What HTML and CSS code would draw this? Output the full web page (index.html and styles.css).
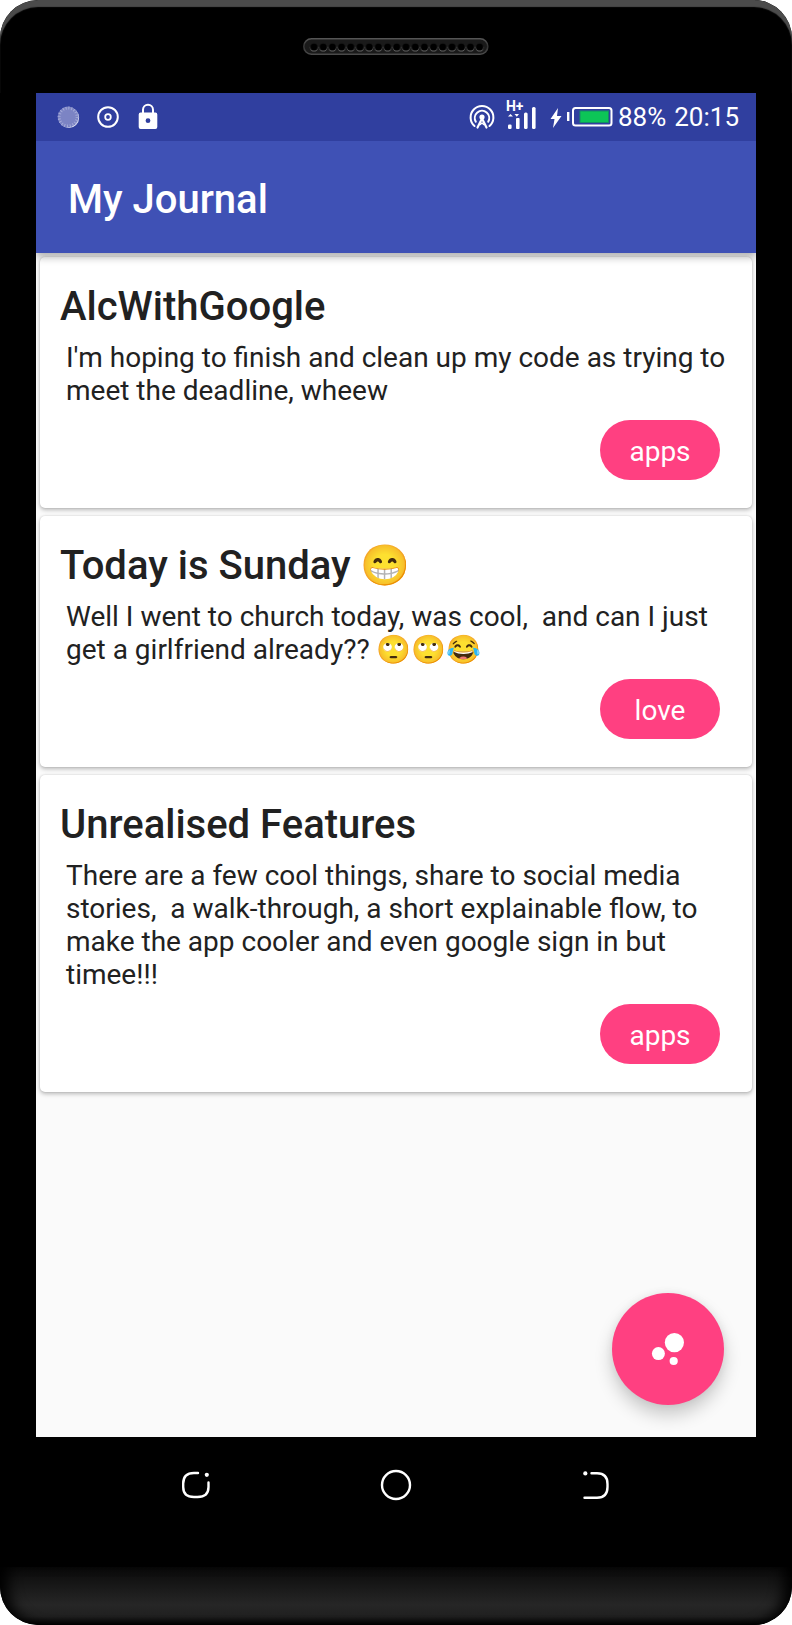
FILE: index.html
```html
<!DOCTYPE html>
<html lang="en">
<head>
<meta charset="utf-8">
<meta name="viewport" content="width=device-width, initial-scale=1">
<title>My Journal</title>
<link rel="stylesheet" href="styles.css">
</head>
<body>
<div class="phone">
  <div class="bezel-top">
    <svg class="speaker" width="186" height="17" viewBox="0 0 186 17" aria-hidden="true">
      <defs>
        <linearGradient id="rim" x1="0" y1="0" x2="0" y2="1">
          <stop offset="0" stop-color="#555"/><stop offset=".5" stop-color="#333"/><stop offset="1" stop-color="#4a4a4a"/>
        </linearGradient>
        <pattern id="holes" x="6.4" y="4" width="9.2" height="10" patternUnits="userSpaceOnUse">
          <circle cx="4.6" cy="5.6" r="4" fill="#626262"/><circle cx="4.6" cy="4.6" r="4" fill="#151515"/><circle cx="4.6" cy="5" r="3.3" fill="#000"/>
        </pattern>
      </defs>
      <rect x=".8" y=".8" width="184" height="15.4" rx="7.7" fill="#1a1a1a" stroke="url(#rim)" stroke-width="1.6"/>
      <rect x="6.4" y="4" width="174.8" height="10" fill="url(#holes)"/>
    </svg>
  </div>

  <div class="screen">
    <div class="status-bar">
      <div class="status-left">
        <svg width="24" height="28" viewBox="0 0 24 28" aria-hidden="true">
          <circle cx="12.9" cy="14.8" r="10.2" fill="#dfe2f3"/>
          <circle cx="12.1" cy="14" r="10.4" fill="#7c84c4"/>
          <circle cx="12.1" cy="14" r="9" fill="none" stroke="#a5abd8" stroke-width="3" stroke-dasharray="1 1.83"/>
        </svg>
        <svg width="24" height="28" viewBox="0 0 24 28" fill="none" stroke="#fff" aria-hidden="true">
          <circle cx="12" cy="14" r="9.8" stroke-width="2"/><circle cx="12" cy="14" r="2.8" stroke-width="1.8"/>
        </svg>
        <svg width="24" height="28" viewBox="0 0 24 28" aria-hidden="true">
          <path d="M7 11V6.800A5 5 0 0 1 17 6.800V11" fill="none" stroke="#fff" stroke-width="2"/>
          <path fill="#fff" fill-rule="evenodd" d="M4.600 9.500H19.400Q21.300 9.500 21.300 11.400V24Q21.300 26 19.400 26H4.600Q2.700 26 2.700 24V11.400Q2.700 9.500 4.600 9.500ZM12 15.300A2.400 2.400 0 1 0 12 20.100A2.400 2.400 0 1 0 12 15.300Z"/>
        </svg>
      </div>
      <div class="status-right">
        <svg width="26" height="28" viewBox="0 0 26 28" fill="none" stroke="#fff" stroke-width="2" stroke-linecap="round" stroke-linejoin="round" aria-hidden="true">
          <path d="M5.500 23A11.400 11.400 0 1 1 20.500 23"/>
          <path d="M6.800 18.700A7.200 7.200 0 1 1 19.200 18.700"/>
          <path d="M8.500 24.500L13 15.500L17.500 24.500" stroke-width="2.200"/>
          <path d="M11.200 21.500L13 20L14.800 21.500" stroke-width="1.600"/>
          <circle cx="13" cy="14" r="1.600" fill="#fff"/>
        </svg>
        <div class="network">
          <span class="network-type">H+</span>
          <svg width="30" height="28" viewBox="0 0 30 28" fill="#fff" aria-hidden="true">
            <path d="M2 13.500L4.500 11L7 13.500ZM8.500 11H13L10.800 13.800Z"/>
            <rect x="2" y="21.500" width="3.600" height="4.500" rx="1.200"/><rect x="10" y="15" width="3.600" height="11" rx="1"/><rect x="18" y="9.500" width="3.600" height="16.500" rx="1.500"/><rect x="26" y="4" width="3.600" height="22" rx="1.500"/>
          </svg>
        </div>
        <svg class="bolt" width="12" height="28" viewBox="0 0 12 28" aria-hidden="true"><path fill="#fff" d="M8 5L.500 16H4.500L3 25L11.500 13H7Z"/></svg>
        <svg class="battery" width="46" height="28" viewBox="0 0 46 28" aria-hidden="true">
          <rect x="0" y="9" width="2.400" height="9" fill="#fff"/>
          <rect x="6" y="5" width="38.500" height="17.500" rx="2.500" fill="none" stroke="#fff" stroke-width="2"/>
          <rect x="13" y="8" width="28.500" height="11.500" fill="#0cc557" stroke="#148d65"/>
        </svg>
        <span>88%</span>
        <time class="clock">20:15</time>
      </div>
    </div>

    <header class="app-bar"><h1 class="heading">My Journal</h1></header>

    <main class="content">
      <article class="card">
        <h2 class="heading">AlcWithGoogle</h2>
        <p class="entry">I'm hoping to finish and clean up my code as trying to meet the deadline, wheew</p>
        <span class="tag">apps</span>
      </article>
      <article class="card">
        <h2 class="heading">Today is Sunday 😁</h2>
        <p class="entry">Well I went to church today, was cool,  and can I just get a girlfriend already?? 🙄🙄😂</p>
        <span class="tag">love</span>
      </article>
      <article class="card">
        <h2 class="heading">Unrealised Features</h2>
        <p class="entry">There are a few cool things, share to social media stories,  a walk-through, a short explainable flow, to make the app cooler and even google sign in but timee!!!</p>
        <span class="tag">apps</span>
      </article>
      <button class="fab" type="button" aria-label="New entry">
        <svg width="48" height="48" viewBox="0 0 48 48" fill="#fff" aria-hidden="true">
          <circle cx="30.400" cy="17.600" r="9.600"/><circle cx="14.400" cy="28.600" r="6.500"/><circle cx="29.700" cy="36" r="4.100"/>
        </svg>
      </button>
    </main>
  </div>

  <nav class="nav-bar" aria-label="System">
    <button class="nav-button" type="button" aria-label="Recent apps">
      <svg width="32" height="32" viewBox="0 0 32 32" fill="none" stroke="#fff" stroke-width="2.400" stroke-linecap="round"><path d="M18 4H14Q3.200 4 3.200 14.500V18Q3.200 28 14 28H17.500Q28.500 28 28.500 18V13.500"/><circle cx="26.800" cy="5.800" r="2.100" fill="#fff" stroke="none"/></svg>
    </button>
    <button class="nav-button" type="button" aria-label="Home">
      <svg width="32" height="32" viewBox="0 0 32 32" fill="none" stroke="#fff" stroke-width="2.400"><circle cx="16" cy="16" r="14"/></svg>
    </button>
    <button class="nav-button" type="button" aria-label="Back">
      <svg width="32" height="32" viewBox="0 0 32 32" fill="none" stroke="#fff" stroke-width="2.400" stroke-linecap="round"><path d="M11.500 4.300H17Q27.500 4.300 27.500 15V18Q27.500 28.700 17 28.700H4.500"/><circle cx="5.300" cy="4.400" r="2.100" fill="#fff" stroke="none"/></svg>
    </button>
  </nav>
  <div class="bezel-bottom"></div>
</div>
</body>
</html>
```
FILE: styles.css
```css
* { box-sizing: border-box; }

body {
  margin: 0;
  background: #fff;
  color: #212121;
  font-family: Roboto, "Noto Sans", "Noto Color Emoji", sans-serif;
  font-size: 28px;
  line-height: 33px;
}

h1, h2, p { margin: 0; }
svg { display: block; flex: none; }
button { border: 0; padding: 0; cursor: pointer; }

.phone {
  display: flex;
  flex-direction: column;
  min-height: 100vh;
  background: #000;
  border-radius: 38px;
  overflow: hidden;
}

.bezel-top {
  height: 93px;
  padding-top: 38px;
  border-radius: 38px 38px 0 0;
  box-shadow: inset 0 7px 1px #4b4b4b;
}
.speaker { margin: 0 auto; }

.screen {
  flex: 1;
  display: flex;
  flex-direction: column;
  margin: 0 36px;
  background: #fafafa;
}

.status-bar {
  display: flex;
  align-items: center;
  justify-content: space-between;
  height: 48px;
  padding: 0 17px 0 20px;
  background: #303f9f;
  color: #fff;
  font-size: 26px;
}
.status-left { display: flex; gap: 16px; }
.status-right { display: flex; align-items: center; }
.network { position: relative; margin-left: 11px; }
.network-type {
  position: absolute;
  left: 0;
  top: -4px;
  font-size: 14px;
  font-weight: 700;
  line-height: 14px;
}
.bolt { margin-left: 14px; }
.battery { margin: 0 5px; }
.clock { margin-left: 8px; }

.heading {
  font-size: 40px;
  font-weight: 500;
  line-height: 47px;
}

.app-bar {
  position: relative;
  z-index: 1;
  display: flex;
  align-items: center;
  height: 112px;
  padding: 4px 32px 0;
  background: #3f51b5;
  color: #fff;
  box-shadow: 0 4px 8px rgba(0, 0, 0, .3);
  clip-path: inset(0 0 -16px 0);
}

.content {
  position: relative;
  flex: 1;
  display: flex;
  flex-direction: column;
  gap: 8px;
  padding: 4px;
  overflow: hidden;
}

.card {
  display: flex;
  flex-direction: column;
  padding: 26px 20px 28px;
  border-radius: 5px;
  background: #fff;
  box-shadow: 0 2px 4px rgba(0, 0, 0, .26), 0 0 2px rgba(0, 0, 0, .14);
}
.entry {
  margin: 11px 0 13px 6px;
  white-space: pre-wrap;
}
.tag {
  align-self: flex-end;
  min-width: 120px;
  height: 60px;
  margin-right: 12px;
  padding: 0 24px;
  border-radius: 30px;
  background: #ff4081;
  color: #fff;
  line-height: 63px;
  text-align: center;
}

.fab {
  position: absolute;
  right: 32px;
  bottom: 32px;
  display: grid;
  place-items: center;
  width: 112px;
  height: 112px;
  border-radius: 50%;
  background: #ff4081;
  box-shadow: 0 10px 18px rgba(0, 0, 0, .2), 0 0 8px rgba(0, 0, 0, .06);
}

.nav-bar {
  display: flex;
  justify-content: space-around;
  height: 96px;
  padding: 0 96px;
}
.nav-button {
  flex: 1;
  display: grid;
  place-items: center;
  background: none;
}

.bezel-bottom {
  height: 58px;
  margin-top: 34px;
  border-radius: 0 0 38px 38px;
  background: linear-gradient(#0a0a0a, #262626 65%, #202020 85%, #000);
  box-shadow: inset 14px 0 14px -6px #000, inset -14px 0 14px -6px #000;
}
```
